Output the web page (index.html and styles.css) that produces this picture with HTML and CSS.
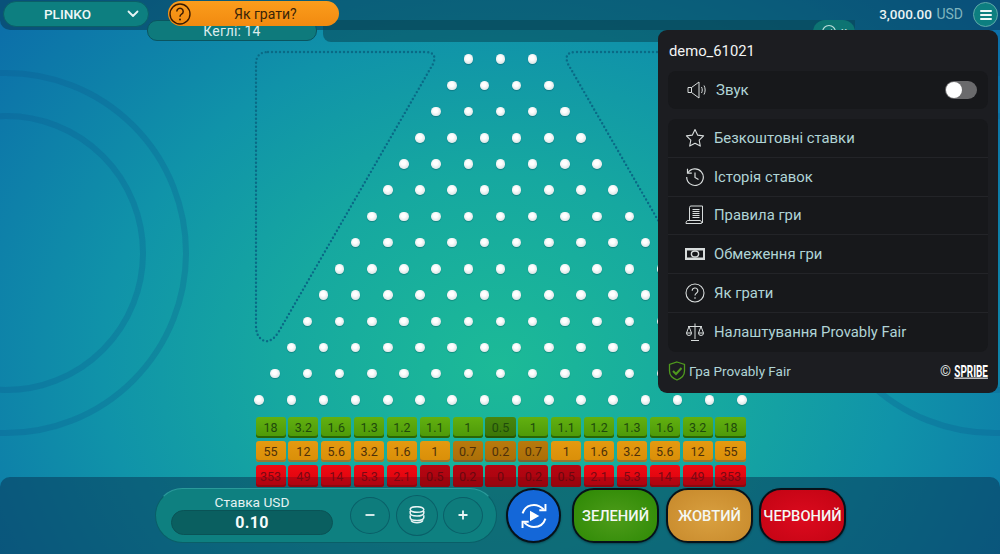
FILE: index.html
```html
<!DOCTYPE html>
<html lang="uk">
<head>
<meta charset="utf-8">
<title>Plinko</title>
<link rel="stylesheet" href="styles.css">
</head>
<body>
<div class="stage">
  <svg class="rings" width="1000" height="554" viewBox="0 0 1000 554" aria-hidden="true">
    <g fill="none" class="ring-lines">
      <circle cx="6" cy="253" r="137"/><circle cx="6" cy="253" r="180"/>
      <circle cx="994" cy="253" r="137"/><circle cx="994" cy="253" r="180"/>
    </g>
    <g fill="none" class="walls">
      <path d="M268 52H425Q438 52 433 64L278 333Q268 347 259 337Q256 333 256 325V64Q256 52 268 52Z"/>
      <path d="M733 52H576Q563 52 568 64L723 333Q733 347 742 337Q745 333 745 325V64Q745 52 733 52Z"/>
    </g>
  </svg>

  <header class="top">
    <button class="game-select"><span>PLINKO</span>
      <svg class="chev" width="12" height="8" viewBox="0 0 12 8"><path d="M1.500 1.500 6 6l4.500-4.500" fill="none" stroke="#e8f4f4" stroke-width="1.800" stroke-linecap="round" stroke-linejoin="round"/></svg>
    </button>
    <div class="balance"><b>3,000.00</b> <span>USD</span></div>
    <button class="burger"><i></i><i></i><i></i></button>
  </header>

  <div class="subbar">
    <div class="pins">Кеглі: 14</div>
    <div class="band">
      <div class="check">
        <svg width="16" height="16" viewBox="0 0 16 16"><circle cx="8" cy="8" r="6.500" fill="none" stroke="#bfe0dc" stroke-width="1.200"/><path d="M5 8l2 2 4-4.500" fill="none" stroke="#bfe0dc" stroke-width="1.200"/></svg>
        <span>x</span>
      </div>
    </div>
  </div>

  <div class="howto">
    <svg width="24" height="24" viewBox="0 0 24 24"><circle cx="12" cy="12" r="10" fill="none" stroke="#3a1a00" stroke-width="1.400"/><path d="M8.800 9.400a3.200 3.200 0 1 1 4.800 2.800c-1 .6-1.600 1.200-1.600 2.600" fill="none" stroke="#3a1a00" stroke-width="1.500"/><circle cx="12" cy="17.600" r="1" fill="#3a1a00"/></svg>
    <span>Як грати?</span>
  </div>

  <main class="board">
    <div class="pegs">
      <div class="row"><i></i><i></i><i></i></div>
      <div class="row"><i></i><i></i><i></i><i></i></div>
      <div class="row"><i></i><i></i><i></i><i></i><i></i></div>
      <div class="row"><i></i><i></i><i></i><i></i><i></i><i></i></div>
      <div class="row"><i></i><i></i><i></i><i></i><i></i><i></i><i></i></div>
      <div class="row"><i></i><i></i><i></i><i></i><i></i><i></i><i></i><i></i></div>
      <div class="row"><i></i><i></i><i></i><i></i><i></i><i></i><i></i><i></i><i></i></div>
      <div class="row"><i></i><i></i><i></i><i></i><i></i><i></i><i></i><i></i><i></i><i></i></div>
      <div class="row"><i></i><i></i><i></i><i></i><i></i><i></i><i></i><i></i><i></i><i></i><i></i></div>
      <div class="row"><i></i><i></i><i></i><i></i><i></i><i></i><i></i><i></i><i></i><i></i><i></i><i></i></div>
      <div class="row"><i></i><i></i><i></i><i></i><i></i><i></i><i></i><i></i><i></i><i></i><i></i><i></i><i></i></div>
      <div class="row"><i></i><i></i><i></i><i></i><i></i><i></i><i></i><i></i><i></i><i></i><i></i><i></i><i></i><i></i></div>
      <div class="row"><i></i><i></i><i></i><i></i><i></i><i></i><i></i><i></i><i></i><i></i><i></i><i></i><i></i><i></i><i></i></div>
      <div class="row"><i></i><i></i><i></i><i></i><i></i><i></i><i></i><i></i><i></i><i></i><i></i><i></i><i></i><i></i><i></i><i></i></div>
    </div>
    <div class="slots">
      <span class="g">18</span><span class="g">3.2</span><span class="g">1.6</span><span class="g">1.3</span><span class="g">1.2</span><span class="g">1.1</span><span class="g">1</span><span class="g low">0.5</span><span class="g">1</span><span class="g">1.1</span><span class="g">1.2</span><span class="g">1.3</span><span class="g">1.6</span><span class="g">3.2</span><span class="g">18</span>
      <span class="o">55</span><span class="o">12</span><span class="o">5.6</span><span class="o">3.2</span><span class="o">1.6</span><span class="o">1</span><span class="o low">0.7</span><span class="o low">0.2</span><span class="o low">0.7</span><span class="o">1</span><span class="o">1.6</span><span class="o">3.2</span><span class="o">5.6</span><span class="o">12</span><span class="o">55</span>
      <span class="r">353</span><span class="r">49</span><span class="r">14</span><span class="r">5.3</span><span class="r">2.1</span><span class="r low">0.5</span><span class="r low">0.2</span><span class="r low">0</span><span class="r low">0.2</span><span class="r low">0.5</span><span class="r">2.1</span><span class="r">5.3</span><span class="r">14</span><span class="r">49</span><span class="r">353</span>
    </div>
  </main>

  <footer class="bottom">
    <div class="bet">
      <div class="amount">
        <div class="amount-label">Ставка USD</div>
        <div class="amount-value">0.10</div>
      </div>
      <button class="round">
        <svg width="12" height="12" viewBox="0 0 12 12"><path d="M1.500 6h9" stroke="#e8f4f4" stroke-width="1.800"/></svg>
      </button>
      <button class="round coins">
        <svg width="16" height="18" viewBox="0 0 16 18" fill="none" stroke="#e8f4f4" stroke-width="1.500"><ellipse cx="8" cy="3.500" rx="6.800" ry="2.800"/><path d="M1.200 5v2.300c0 1.500 3 2.700 6.800 2.700s6.800-1.200 6.800-2.700V5"/><path d="M1.200 9.200v2.600c0 1.500 3 2.700 6.800 2.700s6.800-1.200 6.800-2.700V9.200"/><path d="M2 14.300c1 1.500 3.400 2.400 6 2.400s5-.9 6-2.400"/></svg>
      </button>
      <button class="round">
        <svg width="12" height="12" viewBox="0 0 12 12"><path d="M1.500 6h9M6 1.500v9" stroke="#e8f4f4" stroke-width="1.800"/></svg>
      </button>
    </div>
    <button class="auto">
      <svg width="30" height="32" viewBox="0 0 34 34" fill="none" stroke="#fff" stroke-width="2.200"><path d="M4 14C6 8 11 4.500 17 4.500c4.500 0 8 2 11 5"/><path d="M30 3.500v7h-7"/><path d="M30 20c-2 6-7 9.500-13 9.500-4.500 0-8-2-11-5"/><path d="M4 30.500v-7h7"/><path d="M12.500 11l10.500 6-10.500 6z" fill="#fff" stroke="none"/></svg>
    </button>
    <button class="play green">ЗЕЛЕНИЙ</button>
    <button class="play yellow">ЖОВТИЙ</button>
    <button class="play red">ЧЕРВОНИЙ</button>
  </footer>

  <aside class="menu">
    <div class="user">demo_61021</div>
    <div class="sound">
      <svg class="ico" width="22" height="20" viewBox="0 0 22 20" fill="none" stroke="#d8dcdc" stroke-width="1"><path d="M1 7.500h3.500L12 2v16l-7.500-5.500H1z"/><path d="M4.500 7.500v5"/><path d="M14.500 7c1 1.800 1 4.200 0 6"/><path d="M17 5.500c1.500 2.800 1.500 6.200 0 9"/></svg>
      <span>Звук</span>
      <div class="toggle"><i></i></div>
    </div>
    <nav class="items">
      <a><svg class="ico" width="20" height="20" viewBox="0 0 20 20" fill="none" stroke="#d8dcdc" stroke-width="1.100"><path d="M10 1.500l2.600 5.600 6 .8-4.400 4.200 1.100 6L10 15.200l-5.300 2.900 1.100-6L1.400 7.900l6-.8z" stroke-linejoin="round"/></svg><span>Безкоштовні ставки</span></a>
      <a><svg class="ico" width="20" height="20" viewBox="0 0 20 20" fill="none" stroke="#d8dcdc" stroke-width="1.200"><path d="M2.800 6A8.300 8.300 0 1 1 1.700 10"/><path d="M2.500 1.800V6.200H6.800"/><path d="M10 5.500V10.500l3.500 2"/></svg><span>Історія ставок</span></a>
      <a><svg class="ico" width="20" height="20" viewBox="0 0 20 20" fill="none" stroke="#d8dcdc" stroke-width="1"><path d="M4.500 15V2.500A1.500 1.500 0 0 1 6 1h11.500v17"/><path d="M1 18.500c0-2 .8-3 2-3h12c1 0 1.500 1 1.500 3z"/><path d="M7.500 4.500h7M7.500 6.500h7M7.500 8.500h7M7.500 10.500h7M7.500 12.500h7"/></svg><span>Правила гри</span></a>
      <a><svg class="ico" width="20" height="20" viewBox="0 0 20 20"><path fill-rule="evenodd" fill="#d8dcdc" d="M0 4h20v12H0zM2 6.500v7h16v-7z"/><ellipse cx="10" cy="10" rx="3.600" ry="3" fill="none" stroke="#d8dcdc" stroke-width="1.400"/></svg><span>Обмеження гри</span></a>
      <a><svg class="ico" width="20" height="20" viewBox="0 0 20 20" fill="none" stroke="#d8dcdc" stroke-width="1.100"><circle cx="10" cy="10" r="9"/><path d="M7.200 7.800a2.800 2.800 0 1 1 4.200 2.400c-.9.500-1.400 1-1.400 2.300"/><circle cx="10" cy="15" r=".8" fill="#d8dcdc" stroke="none"/></svg><span>Як грати</span></a>
      <a><svg class="ico" width="20" height="20" viewBox="0 0 20 20" fill="none" stroke="#d8dcdc" stroke-width="1"><path d="M10 1.500V17M6 18.500h8M3 4.500h14"/><path d="M4 4.500L1.500 11h5zM16 4.500L13.500 11h5z"/><path d="M1.500 11a2.500 2.500 0 0 0 5 0M13.500 11a2.500 2.500 0 0 0 5 0"/></svg><span>Налаштування Provably Fair</span></a>
    </nav>
    <div class="foot">
      <svg width="18" height="20" viewBox="0 0 18 20" fill="none"><path d="M9 1l7.500 2.500V10c0 4.500-3.500 7.500-7.500 9C5 17.500 1.500 14.500 1.500 10V3.500z" stroke="#4f9a1e" stroke-width="1.300"/><path d="M5 10l3 3 5.500-6" stroke="#4f9a1e" stroke-width="2"/></svg>
      <span class="fair">Гра Provably Fair</span>
      <span class="copy">©</span>
      <span class="spribe">SPRIBE</span>
    </div>
  </aside>
</div>
</body>
</html>
```
FILE: styles.css
```css
* { box-sizing: border-box; }
html, body { margin: 0; padding: 0; }
body { font-family: Roboto, "Liberation Sans", sans-serif; background: #0c6fa8; }
button { font-family: inherit; padding: 0; margin: 0; cursor: pointer; }

.stage {
  position: relative;
  width: 1000px;
  height: 554px;
  overflow: hidden;
  display: flex;
  flex-direction: column;
  background: radial-gradient(ellipse 640px 540px at 50% 66%, #1cba97 0%, #16a8a0 35%, #1093a9 62%, #0c6fa9 100%);
}
.rings { position: absolute; left: 0; top: 0; }
.ring-lines circle { stroke: rgba(10, 90, 140, .28); stroke-width: 6; }
.walls path { stroke: #0a6a86; stroke-width: 2.400; stroke-linecap: round; stroke-dasharray: 0 4; }

/* top */
.top {
  position: relative;
  z-index: 2;
  height: 30px;
  flex: none;
  display: flex;
  align-items: flex-start;
  padding: 1px 2px 0 3px;
  border-bottom-left-radius: 10px;
  background: rgba(6, 48, 72, .48);
}
.game-select {
  width: 146px;
  height: 26px;
  display: flex;
  align-items: center;
  border-radius: 13px;
  border: 1px solid #0b5f68;
  background: #0d7f80;
  color: #eef7f7;
  font-size: 13.500px;
  font-weight: 500;
  padding: 0 9px 0 40px;
}
.chev { margin-left: auto; }
.balance { margin-left: auto; margin-top: 5px; font-size: 14px; color: #eaf3f3; }
.balance b { font-weight: 500; font-size: 13.500px; }
.balance span { color: #7fb5bf; margin-left: 1px; }
.burger {
  width: 25px;
  height: 25px;
  margin: 1px 0 0 10px;
  border-radius: 50%;
  border: 1px solid #5fa8a8;
  background: #0d7f80;
  display: flex;
  flex-direction: column;
  align-items: center;
  justify-content: center;
  gap: 2px;
}
.burger i { width: 12px; height: 2px; border-radius: 1px; background: #f0f8f8; }

.subbar {
  position: relative;
  z-index: 3;
  height: 22px;
  flex: none;
  margin-top: -10px;
  display: flex;
  padding: 0 145px 0 147px;
}
.pins {
  width: 170px;
  height: 21px;
  flex: none;
  border: 1px solid #0a5560;
  border-radius: 10px;
  background: #0e7a7c;
  color: #dcecec;
  font-size: 14px;
  text-align: center;
  line-height: 21px;
  letter-spacing: .15px;
}
.band {
  flex: 1;
  margin-left: 6px;
  border-radius: 0 0 0 8px;
  background: rgba(8, 70, 84, .55);
  display: flex;
  justify-content: flex-end;
}
.check {
  width: 42px;
  height: 22px;
  border-radius: 12px 12px 0 0;
  background: #0d7472;
  color: #bfe0dc;
  font-size: 12px;
  display: flex;
  align-items: center;
  justify-content: center;
  gap: 4px;
  padding-top: 2px;
}

.howto {
  position: absolute;
  z-index: 4;
  left: 168px;
  top: 1px;
  width: 171px;
  height: 25px;
  display: flex;
  align-items: center;
  border-radius: 13px;
  background: linear-gradient(#fb9d1c, #f28a10);
  color: #3a2408;
  font-size: 14px;
}
.howto svg { flex: none; }
.howto span { margin-left: 42px; }

/* board */
.board {
  position: relative;
  z-index: 3;
  flex: 1;
  min-height: 0;
  display: flex;
  flex-direction: column;
  align-items: center;
  padding-top: 4px;
}
.pegs { display: grid; grid-auto-rows: 26.230px; justify-items: center; margin-left: 1px; }
.row { display: flex; align-items: center; gap: 22.700px; }
.row i {
  width: 9.500px;
  height: 9.500px;
  border-radius: 50%;
  background: radial-gradient(circle at 45% 40%, #fff 0 25%, #c8d6d8 100%);
  box-shadow: 0 1px 1px rgba(0, 60, 70, .3);
}
.slots {
  margin-top: 4px;
  margin-left: 1px;
  width: 490px;
  display: grid;
  grid-template-columns: repeat(15, 1fr);
  grid-template-rows: 21px 21px 22px;
  column-gap: 2.750px;
  row-gap: 3px;
}
.slots span {
  display: flex;
  align-items: center;
  justify-content: center;
  border-radius: 3px;
  font-size: 12.500px;
}
.slots .g { background: linear-gradient(#62b010, #4c9808); box-shadow: inset 0 -2px 0 #2a6606; color: #1f4a0c; }
.slots .g.low { background: linear-gradient(#47860e, #3a7508); box-shadow: inset 0 -2px 0 #275506; }
.slots .o { background: linear-gradient(#e49a10, #d98e08); box-shadow: inset 0 -2px 0 #9a7630; color: #4d300a; }
.slots .o.low { background: linear-gradient(#b87a0c, #aa6e08); box-shadow: inset 0 -2px 0 #806030; }
.slots .r { background: linear-gradient(#f00a12 0, #e40610 12px, #bc0410 12px, #ac0410 100%); box-shadow: inset 0 -2px 0 #8e0810; color: #7a0814; }
.slots .r.low { background: linear-gradient(#b40612 0, #ae0410 12px, #a0040e 12px, #9a040e 100%); color: #680810; }

/* bottom */
.bottom {
  position: relative;
  z-index: 2;
  height: 77px;
  flex: none;
  display: flex;
  align-items: flex-start;
  padding: 11px 0 0 155px;
  border-radius: 10px 10px 0 0;
  background: rgba(6, 48, 80, .5);
}
.bet {
  width: 342px;
  height: 55px;
  display: flex;
  align-items: center;
  padding-left: 15px;
  border-radius: 28px;
  border: 1px solid #0a5f68;
  border-top-color: #2a9a9a;
  background: #0e8080;
}
.amount { width: 162px; text-align: center; margin-bottom: 2px; }
.amount-label { font-size: 13.700px; line-height: 16px; color: #e4f2f2; }
.amount-value {
  height: 25px;
  line-height: 24px;
  border-radius: 13px;
  border: 1px solid #0a5356;
  background: #0a5f60;
  color: #f4fbfb;
  font-size: 16px;
  font-weight: 700;
  letter-spacing: .3px;
}
.round {
  width: 40px;
  height: 37px;
  margin: -1px 0 0 5px;
  flex: none;
  border-radius: 50%;
  border: 1px solid #0a5f68;
  background: #0e7c7c;
  display: flex;
  align-items: center;
  justify-content: center;
}
.amount + .round { margin-left: 17px; }
.round.coins { width: 42px; height: 41px; margin-left: 6px; }
.auto {
  width: 55px;
  height: 55px;
  margin-left: 9px;
  flex: none;
  border-radius: 50%;
  border: 2px solid #06121a;
  background: #1467d8;
  display: flex;
  align-items: center;
  justify-content: center;
  box-shadow: 0 1px 2px rgba(0, 20, 30, .4);
}
.play {
  width: 87px;
  height: 55px;
  margin-left: 7px;
  flex: none;
  border-radius: 22px;
  border: 2px solid #06121a;
  color: #f4f8f4;
  font-size: 14.700px;
  font-weight: 500;
  white-space: nowrap;
  box-shadow: 0 1px 2px rgba(0, 20, 30, .4);
}
.auto + .play { margin-left: 11px; }
.play.red { margin-left: 6px; }
.green { background: radial-gradient(ellipse at 50% 55%, #4e9c1a, #2f8a06 90%); }
.yellow { background: radial-gradient(ellipse at 50% 55%, #d9a040, #c88a2c 90%); }
.red { background: radial-gradient(ellipse at 50% 55%, #dc0a1e, #c40414 90%); }

/* menu */
.menu {
  position: absolute;
  z-index: 5;
  left: 658px;
  top: 30px;
  width: 340px;
  height: 363px;
  padding: 0 10px;
  border-radius: 9px;
  background: #1c1d21;
  color: #b0d4d6;
}
.user { height: 41px; line-height: 42px; padding-left: 1px; font-size: 14.800px; color: #f2f4f4; }
.sound {
  height: 38px;
  display: flex;
  align-items: center;
  padding: 0 11px 0 19px;
  border-radius: 8px;
  background: #17181b;
  font-size: 15px;
}
.sound span { margin-left: 7px; }
.toggle {
  margin-left: auto;
  width: 32px;
  height: 18px;
  border-radius: 9px;
  background: #6a6a6c;
  padding: 1px;
}
.toggle i { display: block; width: 16px; height: 16px; border-radius: 50%; background: #fff; }
.items {
  margin-top: 10px;
  border-radius: 8px;
  overflow: hidden;
  display: grid;
  grid-auto-rows: 38.800px;
  background: #17181b;
}
.items a {
  display: flex;
  align-items: center;
  padding-left: 17px;
  gap: 9px;
  font-size: 14.850px;
  border-bottom: 1px solid #232428;
}
.items a:last-child { border-bottom: 0; }
.foot {
  height: 39px;
  display: flex;
  align-items: center;
  font-size: 13.500px;
}
.fair { margin-left: 3px; }
.copy { margin-left: auto; font-size: 14px; color: #d8dcdc; }
.spribe {
  display: inline-block;
  margin-left: -14px;
  font-weight: 700;
  font-size: 15px;
  line-height: 16px;
  color: #fff;
  text-decoration: underline;
  transform: scale(.66, 1.1);
  transform-origin: right center;
}
```
